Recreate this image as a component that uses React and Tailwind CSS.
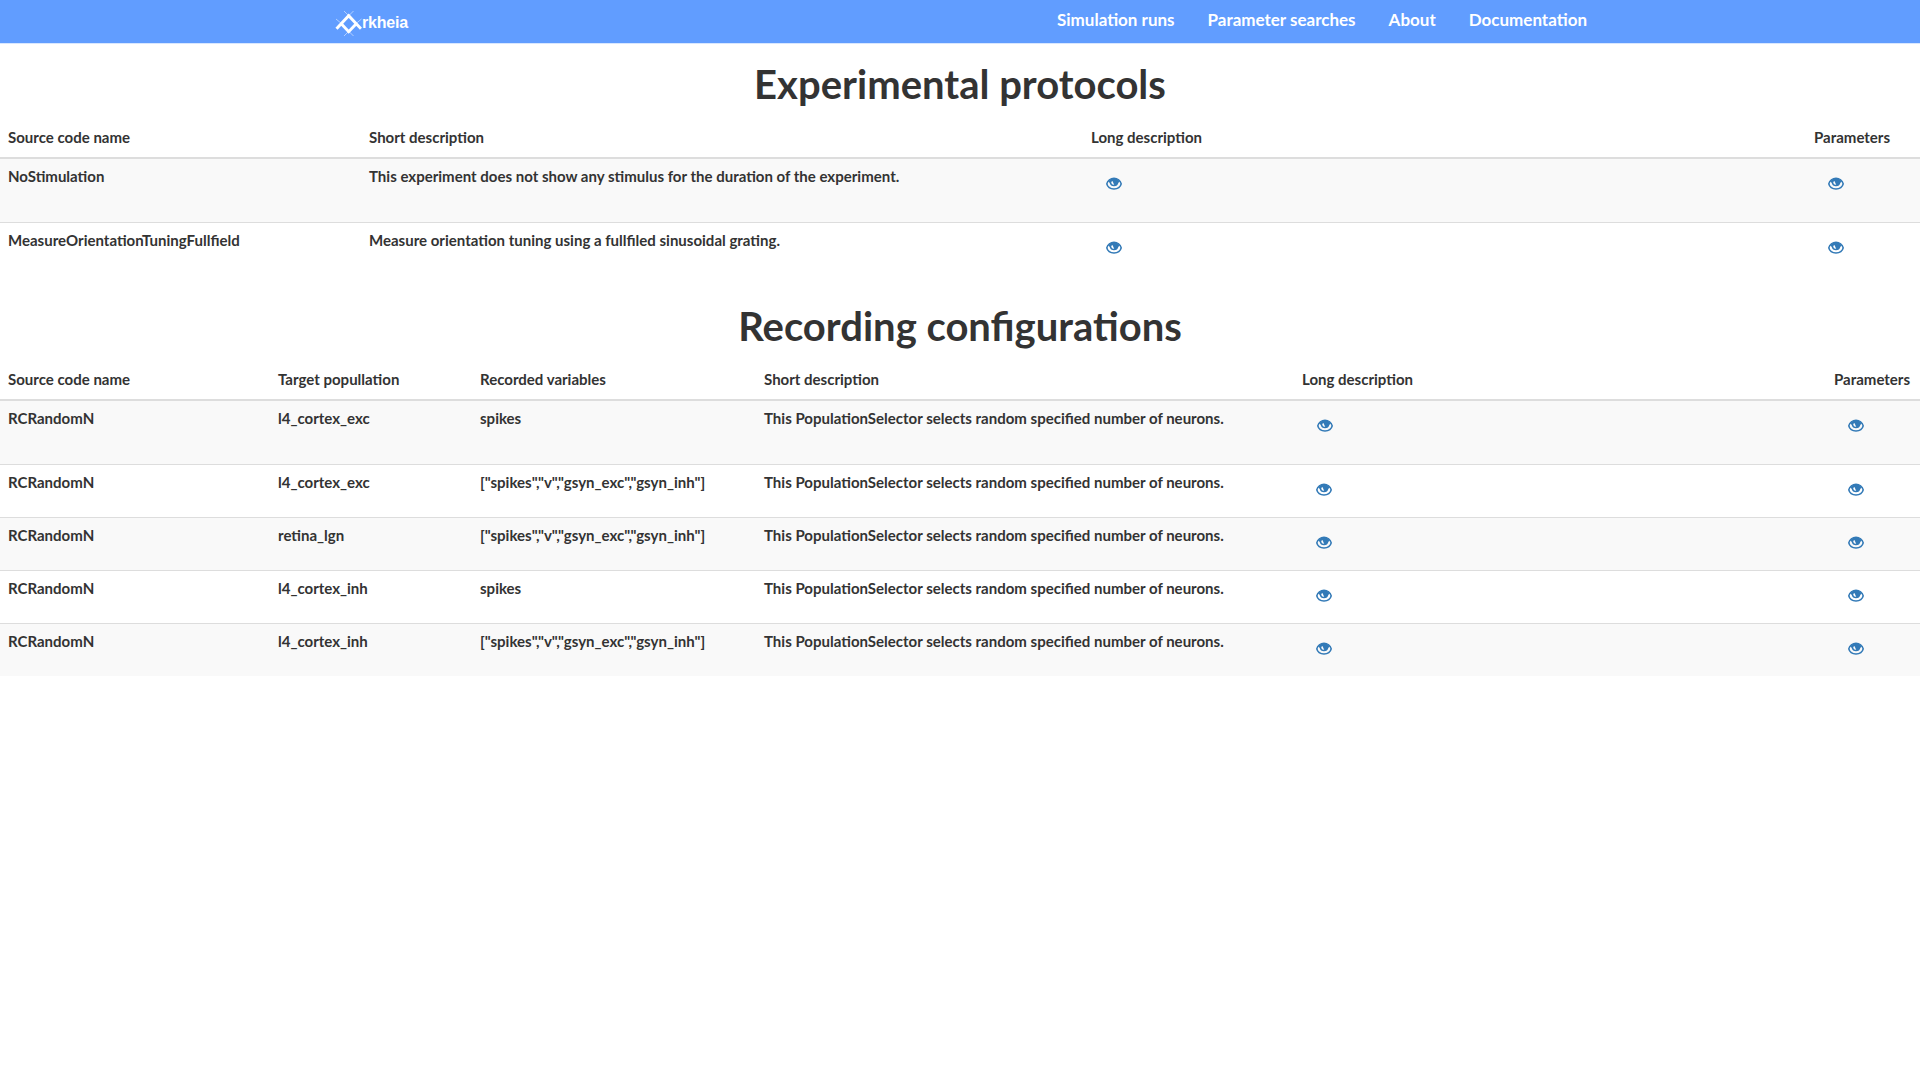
const Eye=({shift})=> <svg width="16" height="16" viewBox="0 0 16 16" className={shift?"block ml-[0.6px]":"block"}><path d="M8 2.3C4.7 2.3 1.6 4.7.8 7.900c.8 3.200 3.900 5.100 7.200 5.100s6.400-1.900 7.200-5.100C14.400 4.700 11.300 2.300 8 2.300Z" fill="none" stroke="#337ab7" strokeWidth="1.6"/><path fill="#337ab7" fillRule="evenodd" d="M2 5.5C4 2.8 6 2.200 8 2.200s4 .6 6 3.300L12.400 6.800a4.500 4.500 0 0 1-8.800 0ZM5.200 6c.2 1.500.9 2.700 2.300 2.700.4 0 .7-.3.7-.6-.6-.3-1-.7-1-1.500L6.400 5Z"/></svg>;
function Table({title,heads,widths,rows}){
  return <section>
    <h1 className="pt-[19px] pb-[11px] text-center text-[40px] leading-[45px] font-bold">{title}</h1>
    <table className="w-full table-fixed border-collapse mb-[10px] text-[15.02px] leading-[21px] font-bold">
      <colgroup>{widths.map((w,i)=><col key={i} style={{width:w}}/>)}</colgroup>
      <thead><tr className="h-[40px] border-b-2 border-[#ddd]">{heads.map(h=><th key={h} className="px-2 pt-[7px] pb-[9px] text-left align-bottom whitespace-nowrap">{h}</th>)}</tr></thead>
      <tbody>{rows.map((r,i)=><tr key={i} className={(i===0?"h-[64px] ":"h-[53px] border-t border-[#ddd] ")+(i%2===0?"bg-[#f9f9f9]":"")}>
        {r.map((c,j)=><td key={j} className="px-2 pt-[7px] align-top whitespace-nowrap">{c}</td>)}
        <td className="pt-[17px] pl-[22px] align-top"><Eye shift={i===0||r.length===2}/></td><td className="pt-[17px] pl-[22px] align-top"><Eye/></td></tr>)}</tbody>
    </table></section>;
}
const d="This PopulationSelector selects random specified number of neurons.";
const all='["spikes","v","gsyn_exc","gsyn_inh"]';
export default function App(){
  return <div className="min-h-screen bg-white text-[#333] font-['Lato',sans-serif]">
    <nav className="h-[44px] -mb-px border-b border-[#d8e7ff] bg-[#619dff] text-white flex justify-between pl-[335px] pr-[333px] font-bold">
      <a className="flex pt-[10px]"><svg width="27" height="28" viewBox="0 0 27 28" fill="none" stroke="white"><path strokeWidth="2.9" d="M1.500 18.700L13.700 5.700 26 18.700M6.500 14l7.200 7.700L21 14"/><path strokeWidth="1" opacity=".5" d="M9 1l5 5M18.500 1l-5 5M1 9l6 5M26.500 9l-6 5M9 26l5-5M18.500 26l-5-5"/></svg><span className="text-[16px] leading-[26px] tracking-[-0.2px] font-['Liberation_Sans',sans-serif]">rkheia</span></a>
      <div className="flex gap-[33px] text-[17px] leading-[40px]"><a>Simulation runs</a><a>Parameter searches</a><a>About</a><a>Documentation</a></div>
    </nav>
    <Table title="Experimental protocols" widths={[361,722,723,114]} heads={["Source code name","Short description","Long description","Parameters"]} rows={[["NoStimulation","This experiment does not show any stimulus for the duration of the experiment."],["MeasureOrientationTuningFullfield","Measure orientation tuning using a fullfiled sinusoidal grating."]]}/>
    <Table title="Recording configurations" widths={[270,202,284,538,532,94]} heads={["Source code name","Target popullation","Recorded variables","Short description","Long description","Parameters"]} rows={[["RCRandomN","l4_cortex_exc","spikes",d],["RCRandomN","l4_cortex_exc",all,d],["RCRandomN","retina_lgn",all,d],["RCRandomN","l4_cortex_inh","spikes",d],["RCRandomN","l4_cortex_inh",all,d]]}/>
  </div>;
}
